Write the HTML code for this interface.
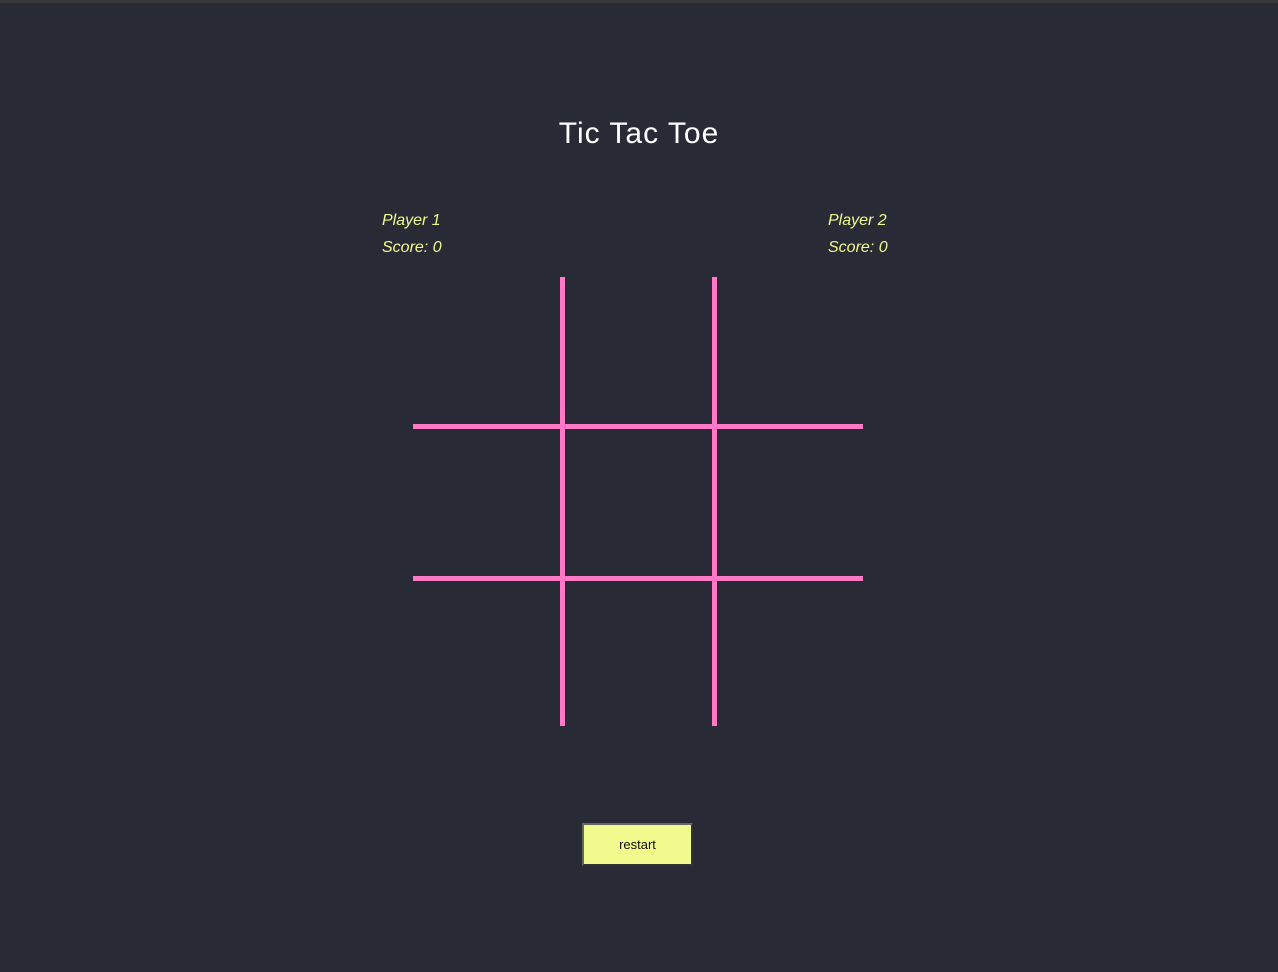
<!DOCTYPE html>
<html><head><style>
html,body{margin:0;padding:0;}
body{width:1278px;height:972px;background:#282a36;position:relative;overflow:hidden;font-family:"Liberation Sans",sans-serif;}
.top{position:absolute;left:0;top:0;width:1278px;height:3px;background:#3a3a3a;}
.t{position:absolute;left:0;width:1278px;text-align:center;top:117px;color:#fff;font-size:30px;letter-spacing:1px;}
.p{position:absolute;color:#f1fa8c;font-size:16px;line-height:27px;font-style:italic;}
.l{position:absolute;background:#ff79c6;}
.btn{position:absolute;left:582px;top:823px;width:107px;height:39px;background:#f1fa8c;border:2px solid #666;border-right-color:#333;border-bottom-color:#333;font-size:13px;text-align:center;line-height:39px;color:#111;}
</style></head><body>
<div class="top"></div>
<div class="t">Tic Tac Toe</div>
<div class="p" style="left:382px;top:207px">Player 1<br>Score: 0</div>
<div class="p" style="left:828px;top:207px">Player 2<br>Score: 0</div>
<div class="l" style="left:560px;top:277px;width:5px;height:449px"></div>
<div class="l" style="left:712px;top:277px;width:5px;height:449px"></div>
<div class="l" style="left:413px;top:424px;width:450px;height:5px"></div>
<div class="l" style="left:413px;top:576px;width:450px;height:5px"></div>
<div class="btn">restart</div>
</body></html>
